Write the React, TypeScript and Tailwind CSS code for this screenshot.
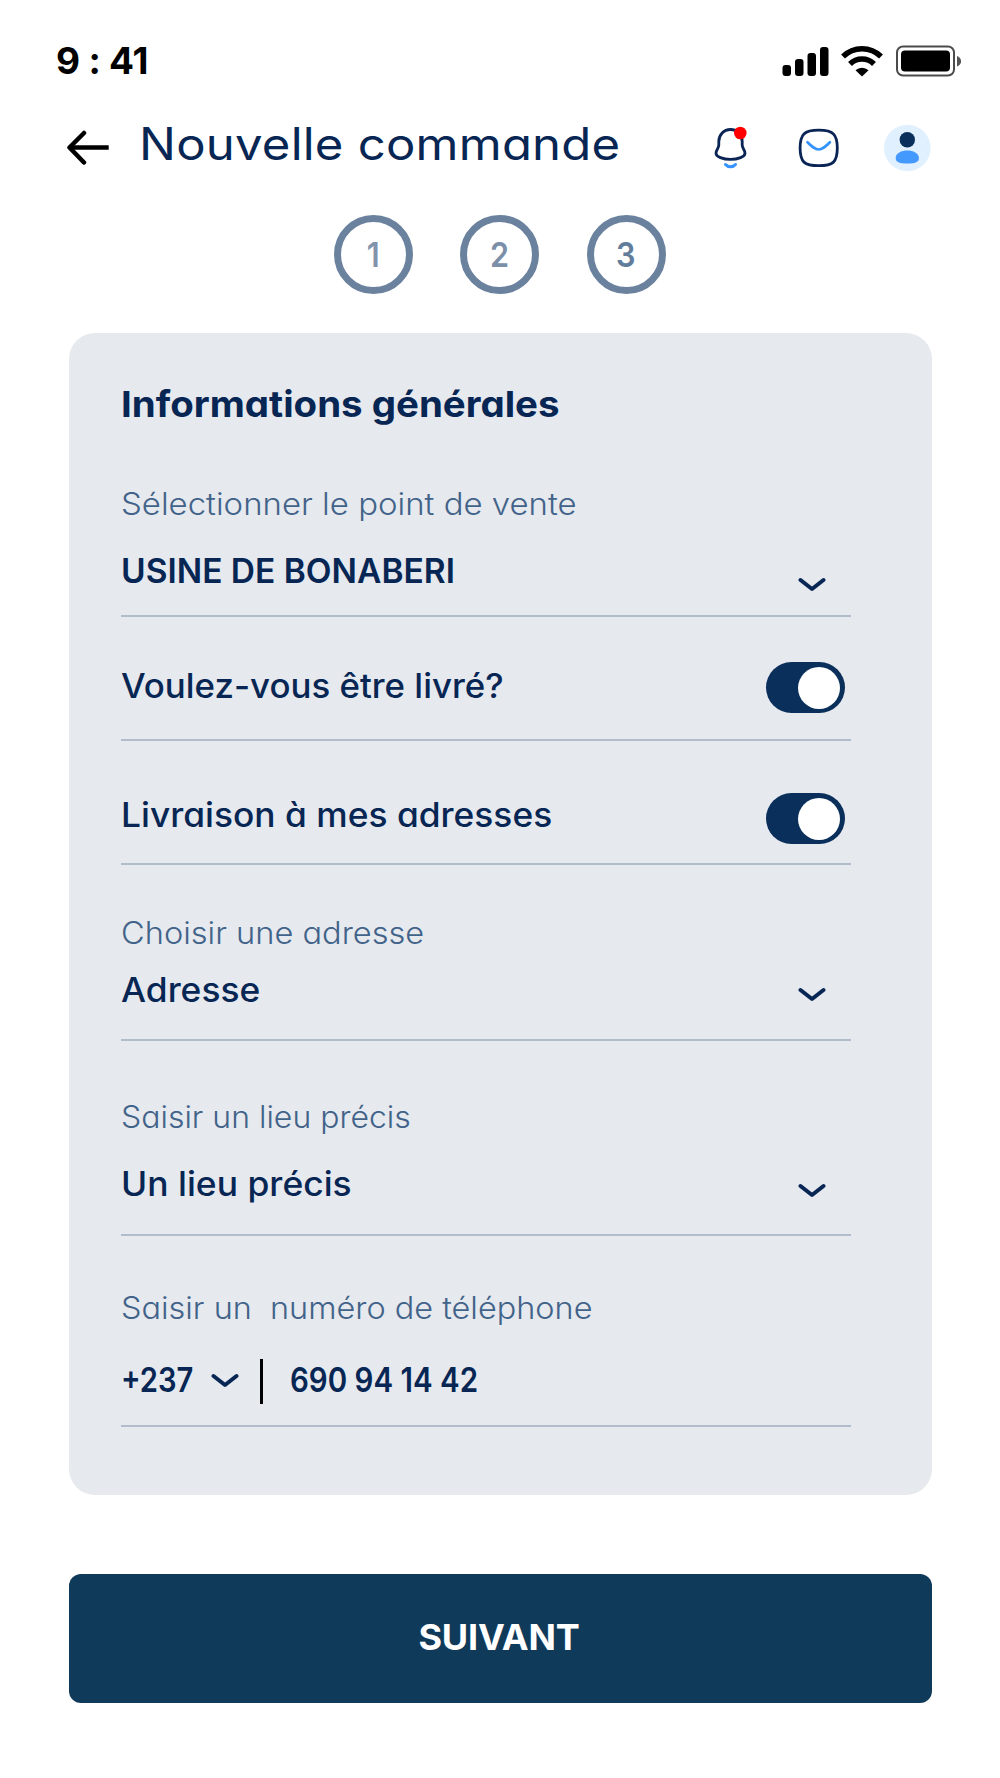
import { useState, type ReactNode } from "react";

function StatusBar() {
  return (
    <div className="flex h-[122px] items-start justify-between pt-[41px] pr-[39px] pl-[56px]">
      <span className="text-[37px] leading-10 font-bold tracking-[-0.2px] text-black">9 : 41</span>
      <svg className="mt-[3px] h-9 w-[180px]" viewBox="781 44 180 36">
        {/* Signal */}
        <rect x="782.5" y="65" width="8.5" height="11" rx="3" />
        <rect x="795" y="59" width="8.5" height="17" rx="3" />
        <rect x="807.5" y="53" width="8.5" height="23" rx="3" />
        <rect x="820" y="47" width="8.5" height="29" rx="3" />
        {/* Wifi */}
        <path d="M843 56.5a27 27 0 0 1 38 0" fill="none" stroke="#000" strokeWidth="5.5" />
        <path d="M850 64a17 17 0 0 1 24 0" fill="none" stroke="#000" strokeWidth="5.5" />
        <path d="M855.5 70.2a9.5 9.5 0 0 1 13 0L862 76.5z" />
        {/* Battery */}
        <rect x="897" y="46.5" width="57" height="29" rx="6" fill="none" stroke="#4b4b4b" strokeWidth="2" />
        <rect x="901" y="50.5" width="49" height="21" rx="4" />
        <path d="M957 56c5.5 2 5.5 8.5 0 10.5z" fill="#555" />
      </svg>
    </div>
  );
}

function Header() {
  return (
    <header className="flex h-[93px] items-start pl-[66px]">
      <button aria-label="Retour" className="mt-[8px]">
        <svg className="h-9 w-11" viewBox="66 130 44 36" fill="none" stroke="#000" strokeWidth="4.5">
          <path d="M84 133L69.5 147.5L84 162.5" strokeLinecap="round" strokeLinejoin="round" />
          <path d="M70 147.5H108.7" />
        </svg>
      </button>
      <h1 className="-mt-[4px] ml-[29px] w-[573px] text-[44.5px] leading-[52px] font-normal whitespace-nowrap">
        <span className="inline-block origin-left scale-x-[1.102] tracking-[0.2px]">Nouvelle commande</span>
      </h1>
      <svg className="h-[52px] w-[220px]" viewBox="712 122 220 52" fill="none" strokeLinecap="round" strokeLinejoin="round">
        {/* Bell */}
        <path
          d="M730.5 129.5c-6.7 0-11.7 5.2-11.7 12v3.5c0 3.5-2.8 5-2.8 8.2c0 3.6 7 6.2 14.5 6.2s14.5-2.6 14.5-6.2c0-3.2-2.8-4.7-2.8-8.2v-3.5c0-6.800-5-12-11.700-12z"
          stroke="#0a2555"
          strokeWidth="2.8"
        />
        <path d="M725.5 164.5c2.5 3 7.5 3 10 0" stroke="#3694ff" strokeWidth="3" />
        <circle cx="740.3" cy="133" r="6.3" fill="#ff0000" />
        {/* Mail */}
        <path
          d="M818.7 130.2c14.5 0 18.6 4 18.6 17.9s-4.1 17.6-18.6 17.6s-18.6-3.7-18.6-17.6s4.1-17.9 18.6-17.9z"
          stroke="#0a2555"
          strokeWidth="2.8"
        />
        <path d="M807.5 142.2c5 5 7.5 7.3 11.2 7.3s6.2-2.3 11.2-7.3" stroke="#3694ff" strokeWidth="2.7" />
        {/* Avatar */}
        <circle cx="907.3" cy="148" r="23.3" fill="#e1f0ff" />
        <circle cx="907.3" cy="139.8" r="7.7" fill="#0b2f5b" />
        <path d="M895.7 158c0-10 23.2-10 23.2 0c0 4.2-3.5 5.6-11.6 5.6s-11.6-1.4-11.6-5.6z" fill="#4499ff" />
      </svg>
    </header>
  );
}

function Steps() {
  const steps = [
    { label: "1", color: "text-[#8194ac]" },
    { label: "2", color: "text-[#7b8fa9]" },
    { label: "3", color: "text-[#627d9b]" },
  ];

  return (
    <div className="flex h-[118px] justify-center gap-[47.5px] pr-px">
      {steps.map((step) => (
        <div
          key={step.label}
          className={`flex size-[79px] items-center justify-center rounded-full border-7 border-[#6b829f] text-[34px] font-semibold ${step.color}`}
        >
          <span className="scale-x-90">{step.label}</span>
        </div>
      ))}
    </div>
  );
}

function Chevron({ className = "" }: { className?: string }) {
  return (
    <svg className={`h-4 w-7 ${className}`} viewBox="0 0 28 16" fill="none">
      <path d="M2.5 3L14 12L25.5 3" stroke="#072654" strokeWidth="4" strokeLinecap="round" strokeLinejoin="round" />
    </svg>
  );
}

interface TextProps {
  children: ReactNode;
  // scale-x class that sets the letter width
  stretch: string;
  className?: string;
}

function Label({ children, stretch, className = "" }: TextProps) {
  return (
    <div className={`h-10 text-[30.5px] leading-10 font-light whitespace-pre text-[#426389] ${className}`}>
      <span className={`inline-block origin-left ${stretch}`}>{children}</span>
    </div>
  );
}

function Value({ children, stretch, className = "font-medium" }: TextProps) {
  return (
    <div className={`h-10 text-[33.5px] leading-10 whitespace-nowrap ${className}`}>
      <span className={`inline-block origin-left ${stretch}`}>{children}</span>
    </div>
  );
}

function Toggle({ label, className = "" }: { label: string; className?: string }) {
  const [on, setOn] = useState(true);

  return (
    <button
      role="switch"
      aria-checked={on}
      aria-label={label}
      onClick={() => setOn(!on)}
      className={`mr-[6.5px] flex h-[51px] w-[79px] items-center rounded-full bg-[#0b2f5b] px-[4.5px] ${
        on ? "justify-end" : "justify-start"
      } ${className}`}
    >
      <span className="size-[42px] rounded-full bg-white" />
    </button>
  );
}

export default function App() {
  return (
    <div className="h-[1778px] w-[1000px] overflow-hidden bg-white font-['Inter',sans-serif] text-[#072654] [font-feature-settings:'cv11']">
      <StatusBar />
      <Header />
      <Steps />

      <section className="mx-[69px] h-[1162px] w-[863px] rounded-[26px] bg-[#e6e9ee] pr-[81px] pl-[52px]">
        <div className="h-[284px] border-b-2 border-[#b1bdcd] pt-[51px]">
          <h2 className="h-10 text-[36px] leading-10 font-bold whitespace-nowrap">
            <span className="inline-block origin-left scale-x-[1.068]">Informations générales</span>
          </h2>
          <Label stretch="scale-x-[1.08]" className="mt-[60px]">
            Sélectionner le point de vente
          </Label>
          <div className="mt-[27px] flex justify-between">
            <Value stretch="scale-x-100" className="font-semibold">
              USINE DE BONABERI
            </Value>
            <Chevron className="mt-[26px] mr-[25px]" />
          </div>
        </div>

        <div className="flex h-[124px] justify-between border-b-2 border-[#b1bdcd]">
          <Value stretch="scale-x-[1.04]" className="mt-[49px] font-medium">
            Voulez-vous être livré?
          </Value>
          <Toggle label="Voulez-vous être livré?" className="mt-[45px]" />
        </div>

        <div className="flex h-[124px] justify-between border-b-2 border-[#b1bdcd]">
          <Value stretch="scale-x-[1.055]" className="mt-[54px] font-medium">
            Livraison à mes adresses
          </Value>
          <Toggle label="Livraison à mes adresses" className="mt-[52px]" />
        </div>

        <div className="h-[176px] border-b-2 border-[#b1bdcd] pt-[48px]">
          <Label stretch="scale-x-[1.068]">Choisir une adresse</Label>
          <div className="mt-[17px] flex justify-between">
            <Value stretch="scale-x-[1.055]">Adresse</Value>
            <Chevron className="mt-[17px] mr-[25px]" />
          </div>
        </div>

        <div className="h-[195px] border-b-2 border-[#b1bdcd] pt-[56px]">
          <Label stretch="scale-x-[1.048]">Saisir un lieu précis</Label>
          <div className="mt-[27px] flex justify-between">
            <Value stretch="scale-x-[1.058]">Un lieu précis</Value>
            <Chevron className="mt-[19px] mr-[25px]" />
          </div>
        </div>

        <div className="h-[191px] border-b-2 border-[#b1bdcd] pt-[52px]">
          <Label stretch="scale-x-[1.063]">{"Saisir un  numéro de téléphone"}</Label>
          <div className="mt-[32px] flex">
            <Value stretch="scale-x-[0.87]" className="w-[90px] font-semibold">
              +237
            </Value>
            <Chevron className="mt-[13px]" />
            <span className="-mt-px mr-[26px] ml-[21px] h-[45px] w-[2.5px] bg-black" />
            <Value stretch="scale-x-[0.88]" className="ml-px font-semibold">
              690 94 14 42
            </Value>
          </div>
        </div>
      </section>

      <button className="mx-[69px] mt-[79px] flex h-[129px] w-[863px] items-center justify-center rounded-xl bg-[#103a5a] pr-[3px] pb-[4px] text-[36px] font-bold tracking-[-0.2px] text-white">
        SUIVANT
      </button>
    </div>
  );
}
